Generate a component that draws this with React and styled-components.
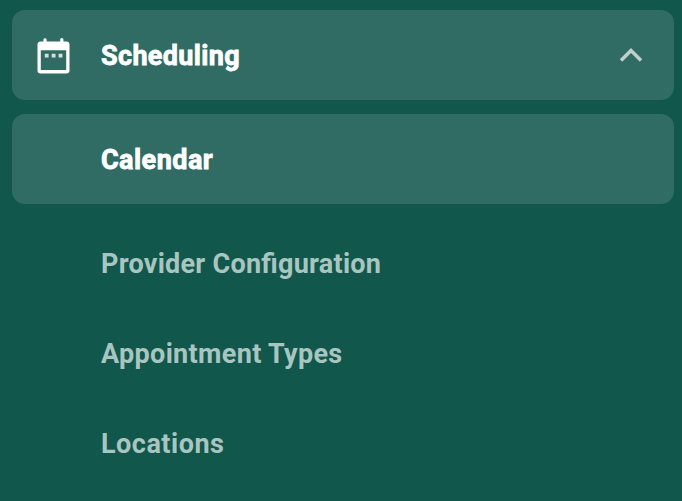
import React from "react";
import styled, { createGlobalStyle } from "styled-components";

const GlobalStyle = createGlobalStyle`
  * { box-sizing: border-box; }
  body { margin: 0; background: #12574c; }
`;

const Sidebar = styled.nav`
  display: flex;
  flex-direction: column;
  width: 682px;
  height: 501px;
  padding: 10px 8px 0 11.5px;
  overflow: hidden;
  background: #12574c;
`;

const NavItem = styled.button`
  display: flex;
  align-items: center;
  flex: none;
  width: 100%;
  height: 90px;
  padding: 0 30px 0 24.5px;
  border: 0;
  border-radius: 13px;
  background: ${(p) => (p.$active ? "#306c63" : "transparent")};
  color: ${(p) => (p.$active ? "#ffffff" : "#a9c5c0")};
  font: 700 27px/32px Roboto, sans-serif;
  font-feature-settings: "liga" 1;
  letter-spacing: ${(p) => p.$tracking}px;
  text-align: left;
  -webkit-text-stroke: ${(p) => (p.$active ? "0.8px #ffffff" : "0")};
`;

const SubList = styled.div`
  display: flex;
  flex-direction: column;
  margin-top: 14px;
`;

const IconSlot = styled.span`
  display: flex;
  flex: none;
  width: 65px;
  height: 40px;
`;

const Label = styled.span`
  flex: 1;
  white-space: nowrap;
  padding-top: ${(p) => (p.$lowered ? "1px" : "0")};
`;

const LinkGroup = styled.div`
  margin-top: 15px;
`;

const CalendarIcon = () => (
  <svg width="36" height="40" viewBox="0 0 36 40" fill="#fff">
    <path
      fillRule="evenodd"
      d="M9 3.2a1.6 1.6 0 0 1 1.6 1.4V6.6h13.6V4.6a1.6 1.6 0 0 1 3.2 0V6.6h2.9a3.2 3.2 0 0 1 3.2 3.2v25.5a3.2 3.2 0 0 1-3.2 3.2H4.7a3.2 3.2 0 0 1-3.2-3.2V9.8a3.2 3.2 0 0 1 3.2-3.2h2.7V4.6A1.6 1.6 0 0 1 9 3.2zM4.8 15.2v19.9h25.4V15.2z"
    />
    <path fill="#d3e0de" d="M8.8 18.8h3.8v3.8H8.8zM15.7 18.8h3.8v3.8h-3.8zM22.6 18.8h3.8v3.8h-3.8z" />
  </svg>
);

const Chevron = () => (
  <svg width="26" height="24" viewBox="0 0 26 24" fill="none" stroke="#bdd0cd" strokeWidth="3.5">
    <path d="M3 17.5L13 7.5L23 17.5" />
  </svg>
);

const links = [
  { name: "Provider Configuration", tracking: 0.26 },
  { name: "Appointment Types", tracking: 0.33 },
  { name: "Locations", tracking: 0.5 },
];

export default function App() {
  return (
    <>
      <GlobalStyle />
      <Sidebar>
        <NavItem $active $tracking={0.35}>
          <IconSlot><CalendarIcon /></IconSlot>
          <Label $lowered>Scheduling</Label>
          <Chevron />
        </NavItem>
        <SubList>
          <NavItem $active $tracking={0.45}><IconSlot /><Label $lowered>Calendar</Label></NavItem>
          <LinkGroup>
            {links.map(({ name, tracking }) => (
              <NavItem key={name} $tracking={tracking}><IconSlot /><Label>{name}</Label></NavItem>
            ))}
          </LinkGroup>
        </SubList>
      </Sidebar>
    </>
  );
}
